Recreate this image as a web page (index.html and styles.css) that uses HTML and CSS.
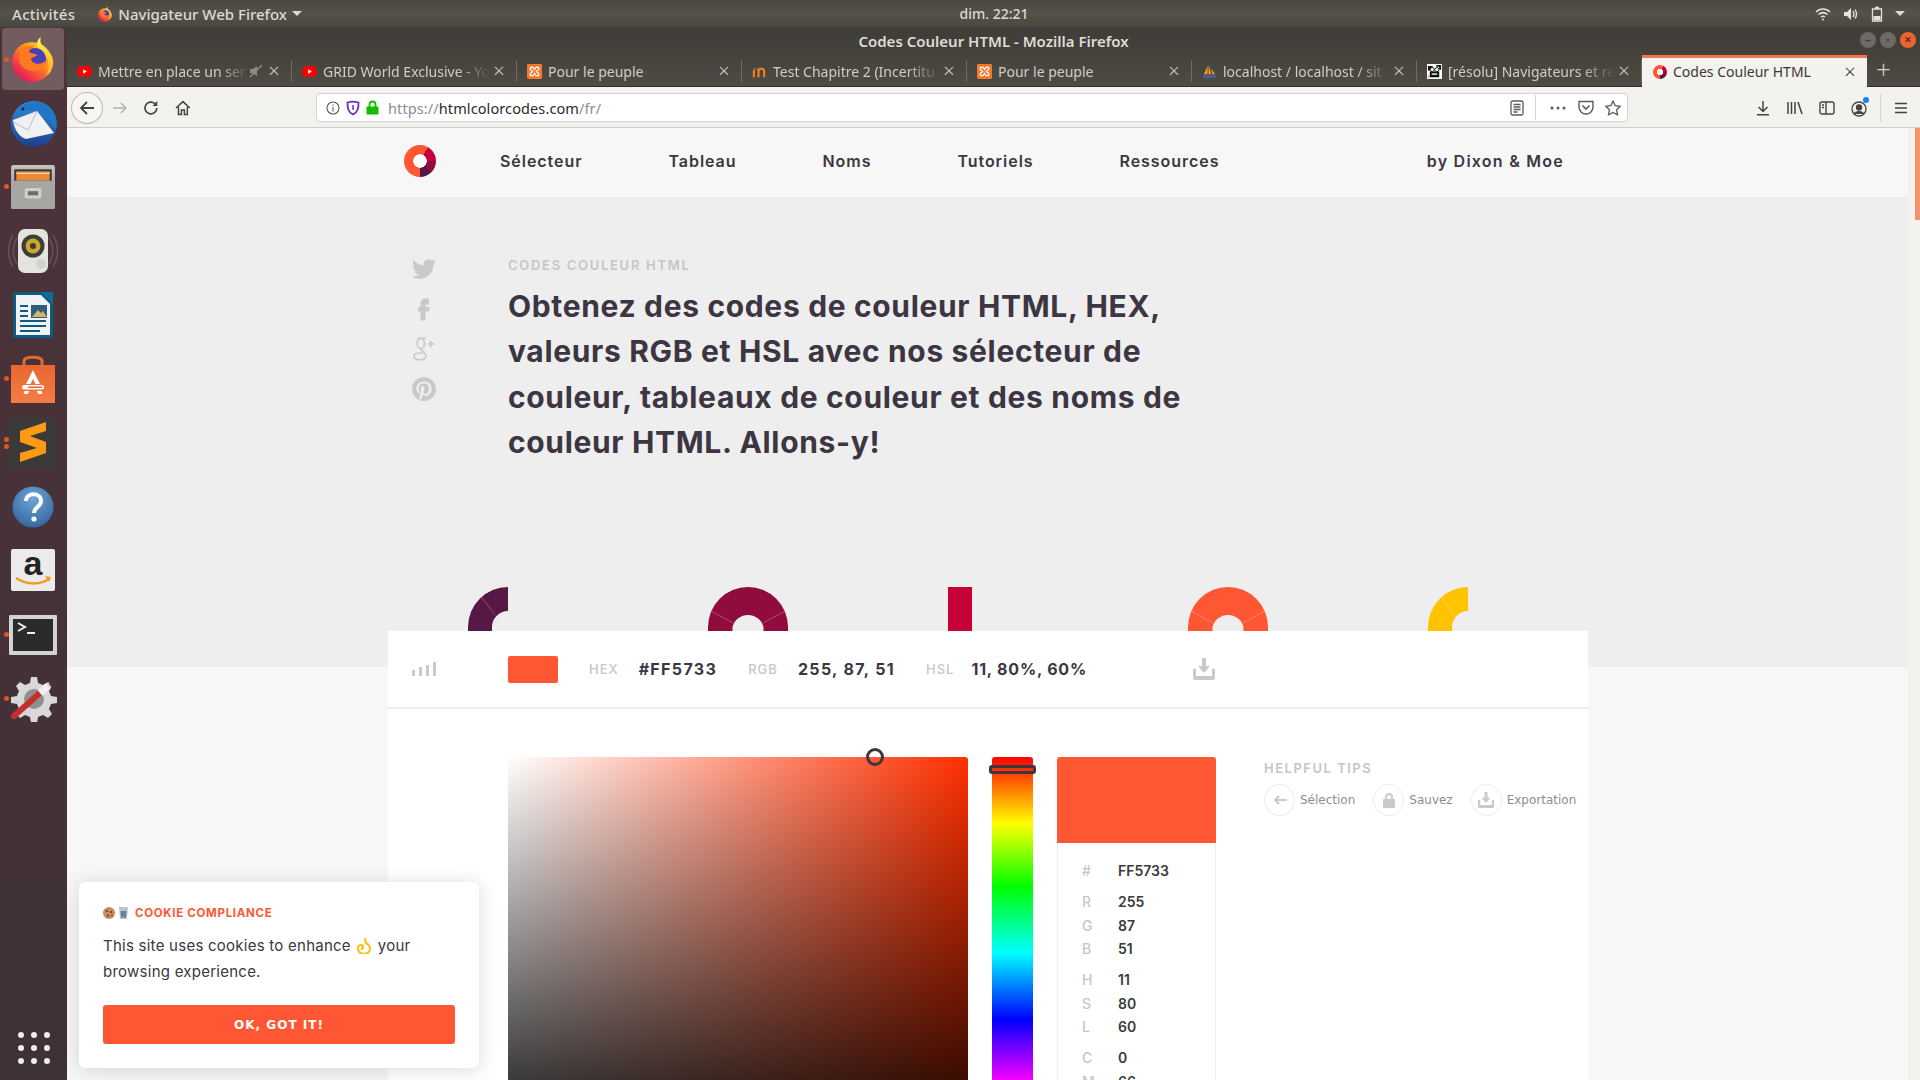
FILE: index.html
```html
<!DOCTYPE html>
<html lang="fr">
<head>
<meta charset="UTF-8">
<title>Codes Couleur HTML - Mozilla Firefox</title>
<link rel="stylesheet" href="styles.css">
</head>
<body>
<svg class="defs" width="0" height="0">
	<defs>
		<linearGradient id="ffBody" x1="0.9" y1="0.1" x2="0.2" y2="0.95">
			<stop offset="0" stop-color="#ffd23a"/>
			<stop offset="0.4" stop-color="#ff8a1e"/>
			<stop offset="0.8" stop-color="#f0344a"/>
			<stop offset="1" stop-color="#d81b60"/>
		</linearGradient>
		<linearGradient id="ffFlame" x1="0.3" y1="0" x2="0.6" y2="1">
			<stop offset="0" stop-color="#fff44f"/>
			<stop offset="1" stop-color="#ffb01f"/>
		</linearGradient>
		<linearGradient id="tbBody" x1="0" y1="0" x2="0" y2="1">
			<stop offset="0" stop-color="#2f8fd8"/>
			<stop offset="1" stop-color="#1d3f8f"/>
		</linearGradient>
		<linearGradient id="cabinet" x1="0" y1="0" x2="0" y2="1">
			<stop offset="0" stop-color="#c4c4c1"/>
			<stop offset="1" stop-color="#8a8a87"/>
		</linearGradient>
		<linearGradient id="bag" x1="0" y1="0" x2="0" y2="1">
			<stop offset="0" stop-color="#e9662f"/>
			<stop offset="1" stop-color="#f37d43"/>
		</linearGradient>
		<radialGradient id="helpBall" cx="0.5" cy="0.3" r="0.8">
			<stop offset="0" stop-color="#6fa5d6"/>
			<stop offset="1" stop-color="#2b5f9c"/>
		</radialGradient>
		<symbol id="firefox" viewBox="0 0 48 48">
			<circle cx="23" cy="27" r="20" fill="url(#ffBody)"/>
			<path d="M32 2c-2 5 1 9 5 12 6 5 8 10 7 16-1 5-3 9-7 11 3-5 4-12 0-18-3-5-9-8-9-14 0-3 2-6 4-7z" fill="url(#ffFlame)"/>
			<circle cx="26" cy="24" r="11" fill="#4a3fb8"/>
			<path d="M13 14c4-3 8-4 12-2-3 1-5 3-5 5 2 2 6 1 8 3-1 2-5 2-6 4 1 4 6 6 11 4 3-1 5-3 6-6 0 8-7 14-15 14-8 0-14-6-14-13 0-4 1-7 3-9z" fill="#ff7a1e"/>
		</symbol>
		<symbol id="yt" viewBox="0 0 16 16">
			<rect x="0.5" y="2.5" width="15" height="11" rx="3" fill="#f00"/>
			<path d="M6.5 5.5v5l4-2.5z" fill="#fff"/>
		</symbol>
		<symbol id="xampp" viewBox="0 0 16 16">
			<rect width="16" height="16" rx="1.5" fill="#f4792b"/>
			<path d="M4 3.5h2.5L8 6l1.5-2.5H12c1 1 1 3-.5 3L10 8l1.5 1.500c1.500 0 1.500 2 .5 3H9.500L8 10l-1.500 2.500H4c-1-1-1-3 .5-3L6 8 4.500 6.500c-1.500 0-1.500-2-.5-3z" fill="none" stroke="#fff" stroke-width="1.3"/>
		</symbol>
		<symbol id="moodle" viewBox="0 0 16 16">
			<path d="M2 14V8c0-2 1-3 2.5-3S7 6 7 8v6M7 14V8c0-2 1.200-3 2.800-3S13 6 13 8v6" fill="none" stroke="#f98012" stroke-width="2.2"/>
			<path d="M1 6l5-3 2 1-4 3z" fill="#555"/>
		</symbol>
		<symbol id="pma" viewBox="0 0 16 16">
			<path d="M2 11L6 2v9zM7 11V1l3 10zM11 11l-1-6 4 6z" fill="#f89c1c"/>
			<rect x="1" y="11.5" width="14" height="3.5" fill="#4a5f8c"/>
		</symbol>
		<symbol id="face" viewBox="0 0 16 16">
			<rect width="16" height="16" fill="#fff"/>
			<path d="M1 2h5v2H4v3H1zM10 1h5v5h-2V3h-3zM3 8h10v6H3z" fill="#111"/>
			<circle cx="5.5" cy="6" r="2.2" fill="#fff" stroke="#111"/>
			<circle cx="10.5" cy="6" r="2.2" fill="#fff" stroke="#111"/>
			<path d="M5 10h6v1.5H5z" fill="#fff"/>
			<path d="M1 12h2v3H1z" fill="#e9a3a3"/>
		</symbol>
	</defs>
</svg>

<header class="topbar">
	<span class="top-activities">Activités</span>
	<svg class="top-ff" width="16" height="16"><use href="#firefox"/></svg>
	<span class="top-app">Navigateur Web Firefox</span>
	<i class="caret"></i>
	<span class="top-clock">dim. 22:21</span>
	<div class="top-status">
		<svg width="16" height="16" viewBox="0 0 16 16" fill="none" stroke="#e4e2dc" stroke-width="1.5"><path d="M1 6c4-4 10-4 14 0M3.5 8.500c3-2.500 6-2.500 9 0M6 11c1.300-1 2.700-1 4 0"/><circle cx="8" cy="13.5" r="1" fill="#e4e2dc" stroke="none"/></svg>
		<svg width="16" height="16" viewBox="0 0 16 16" fill="none" stroke="#e4e2dc" stroke-width="1.3"><path d="M1 6h3l4-4v12l-4-4H1z" fill="#e4e2dc" stroke="none"/><path d="M10 5c1.300 2 1.300 4 0 6M12 3.500c2 3 2 6 0 9"/></svg>
		<svg width="12" height="16" viewBox="0 0 12 16" fill="none" stroke="#e4e2dc" stroke-width="1.3"><path d="M4 1.500h4M1.500 3h9v12h-9z"/><rect x="2.5" y="10" width="7" height="4" fill="#e4e2dc" stroke="none"/></svg>
		<i class="caret"></i>
	</div>
</header>

<div class="desktop">
	<nav class="dock">
		<div class="dock-item dock-active"><i class="run"></i><svg width="48" height="48"><use href="#firefox"/></svg></div>
		<div class="dock-item">
			<svg width="50" height="50" viewBox="0 0 50 50">
				<circle cx="26" cy="26" r="23" fill="url(#tbBody)"/>
				<path d="M5 22l24-9 17 22-28 6c-7-2-12-10-13-19z" fill="#f1f1f1"/>
				<path d="M5 24l15 8 9-19" fill="none" stroke="#b9bcc4" stroke-width="1"/>
				<path d="M10 12c6-8 20-12 30-4 7 6 10 16 7 24-3-8-10-18-18-19z" fill="#2277c4"/>
				<circle cx="15" cy="11" r="1.5" fill="#12294f"/>
			</svg>
		</div>
		<div class="dock-item"><i class="run"></i>
			<svg width="48" height="48" viewBox="0 0 46 46">
				<rect x="2" y="2" width="42" height="42" rx="2" fill="url(#cabinet)"/>
				<rect x="5" y="6" width="36" height="13" fill="#3a3a38"/>
				<rect x="7" y="8" width="32" height="9" fill="#e78a3c"/>
				<path d="M7 10h32" stroke="#f7d9b0" stroke-width="1.2"/>
				<rect x="2" y="17" width="42" height="27" rx="1" fill="#a6a6a3"/>
				<rect x="15" y="24" width="16" height="10" rx="2" fill="#d0d0cd"/>
				<rect x="18" y="27" width="10" height="4" fill="#6c6c6a"/>
			</svg>
		</div>
		<div class="dock-item">
			<svg width="50" height="50" viewBox="0 0 50 50">
				<path d="M9 12c-5 8-5 18 0 26M41 12c5 8 5 18 0 26M5 9c-6 10-6 22 0 32M45 9c6 10 6 22 0 32" fill="none" stroke="#5f5566" stroke-width="1.5"/>
				<rect x="10" y="3" width="30" height="44" rx="7" fill="#e4e4df"/>
				<circle cx="25" cy="20" r="11.5" fill="#3c3c38"/>
				<circle cx="25" cy="20" r="7.5" fill="#c8a92a"/>
				<circle cx="25" cy="20" r="3" fill="#3c3c38"/>
				<circle cx="33" cy="38" r="5" fill="#d2d2cd"/>
			</svg>
		</div>
		<div class="dock-item">
			<svg width="42" height="50" viewBox="0 0 42 50">
				<path d="M1 2h40v46H1z" fill="#0e5a80"/>
				<path d="M4 5h25l9 9v31H4z" fill="#f1f2f3"/>
				<path d="M29 2h12v12z" fill="#0e6d9c"/>
				<path d="M8 16h8M8 21h8M8 26h8M8 31h26M8 36h26M8 41h20" stroke="#0e5a80" stroke-width="2"/>
				<rect x="19" y="15" width="16" height="13" fill="#2d5f7d"/>
				<path d="M20 27l6-7 3 3 2-2 4 6z" fill="#d7b26a"/>
			</svg>
		</div>
		<div class="dock-item"><i class="run"></i>
			<svg width="44" height="48" viewBox="0 0 44 48">
				<path d="M13 13V6c0-5 18-5 18 0v7" fill="none" stroke="#dd6b32" stroke-width="3"/>
				<path d="M0 10h44v38H0z" fill="url(#bag)"/>
				<path d="M22 15l7 14h-4.500L22 24l-2.500 5H15z" fill="#fff"/>
				<rect x="11" y="30" width="22" height="4.500" rx="2.200" fill="#fff"/>
				<rect x="17" y="31.500" width="14" height="1.500" fill="#e9662f"/>
				<path d="M13.500 36h4.500l-1 3h-4.500zM26 36h4.500l1 3H27z" fill="#fff"/>
			</svg>
		</div>
		<div class="dock-item"><i class="run run-top"></i><i class="run run-bottom"></i>
			<svg width="50" height="50" viewBox="0 0 50 50">
				<rect width="50" height="50" rx="3" fill="#3b3a38"/>
				<path d="M12 13l26-9v9l-16 5 16 6v11l-26 9v-9l17-5-17-6z" fill="#ff9a16"/>
			</svg>
		</div>
		<div class="dock-item">
			<svg width="44" height="44" viewBox="0 0 44 44">
				<circle cx="22" cy="22" r="20.5" fill="url(#helpBall)"/>
				<path d="M15 16c0-9 15-9 15 0 0 6-7 6-7 12" fill="none" stroke="#fff" stroke-width="4"/>
				<circle cx="23" cy="34" r="2.6" fill="#fff"/>
			</svg>
		</div>
		<div class="dock-item">
			<svg width="44" height="44" viewBox="0 0 44 44">
				<rect width="44" height="42" rx="2" fill="#ebebeb"/>
				<text class="amazon-a" x="22" y="26" text-anchor="middle">a</text>
				<path d="M5 29c10 7 24 7 33 1" fill="none" stroke="#f29b1d" stroke-width="2.5"/>
				<path d="M34 27l6 1-2 5z" fill="#f29b1d"/>
			</svg>
		</div>
		<div class="dock-item"><i class="run"></i>
			<svg width="48" height="40" viewBox="0 0 48 40">
				<rect width="48" height="40" rx="1" fill="#d4d4d1"/>
				<rect x="4" y="4" width="40" height="32" fill="#2b2b2b"/>
				<path d="M9 8l7 4-7 4" fill="none" stroke="#f0f0f0" stroke-width="2"/>
				<path d="M18 18h8" stroke="#f0f0f0" stroke-width="2"/>
			</svg>
		</div>
		<div class="dock-item"><i class="run"></i>
			<svg width="48" height="46" viewBox="0 0 48 46">
				<path d="M22 1h6l1 6 5 2 5-3 4 4-3 5 2 5 6 1v6l-6 1-2 5 3 5-4 4-5-3-5 2-1 6h-6l-1-6-5-2-5 3-4-4 3-5-2-5-6-1v-6l6-1 2-5-3-5 4-4 5 3 5-2z" fill="#d8d8d8"/>
				<circle cx="25" cy="23" r="10" fill="#8f8f8f"/>
				<path d="M5 40l27-24" stroke="#c5302c" stroke-width="6" stroke-linecap="round"/>
				<path d="M31 17l8-7" stroke="#f0f0f0" stroke-width="7"/>
				<path d="M46 3l-6 5 3 4 5-2" fill="#4a3338"/>
			</svg>
		</div>
		<div class="dock-apps">
			<i></i><i></i><i></i><i></i><i></i><i></i><i></i><i></i><i></i>
		</div>
	</nav>

	<div class="window">
		<div class="titlebar">
			<span class="title-text">Codes Couleur HTML - Mozilla Firefox</span>
			<div class="win-btns">
				<i class="win-btn">–</i><i class="win-btn">▫</i><i class="win-btn win-close">×</i>
			</div>
		</div>

		<div class="tabs">
			<div class="tab"><svg width="15" height="15"><use href="#yt"/></svg><span class="tab-title">Mettre en place un ser</span>
				<svg class="tab-mute" width="14" height="14" viewBox="0 0 14 14" fill="#8f8c85"><path d="M1 5h3l4-3v10L4 9H1z"/><path d="M1 13L13 1" stroke="#8f8c85" stroke-width="1.5"/></svg>
				<span class="tab-x">×</span></div>
			<div class="tab"><svg width="15" height="15"><use href="#yt"/></svg><span class="tab-title">GRID World Exclusive - Yo</span><span class="tab-x">×</span></div>
			<div class="tab"><svg width="15" height="15"><use href="#xampp"/></svg><span class="tab-title tab-full">Pour le peuple</span><span class="tab-x">×</span></div>
			<div class="tab"><svg width="15" height="15"><use href="#moodle"/></svg><span class="tab-title">Test Chapitre 2 (Incertitu</span><span class="tab-x">×</span></div>
			<div class="tab"><svg width="15" height="15"><use href="#xampp"/></svg><span class="tab-title tab-full">Pour le peuple</span><span class="tab-x">×</span></div>
			<div class="tab"><svg width="15" height="15"><use href="#pma"/></svg><span class="tab-title">localhost / localhost / sit</span><span class="tab-x">×</span></div>
			<div class="tab"><svg width="15" height="15"><use href="#face"/></svg><span class="tab-title">[résolu] Navigateurs et re</span><span class="tab-x">×</span></div>
			<div class="tab tab-active"><i class="ring ring-small"></i><span class="tab-title tab-full">Codes Couleur HTML</span><span class="tab-x">×</span></div>
			<span class="tab-new">+</span>
		</div>

		<div class="toolbar">
			<span class="tool-back"><svg width="18" height="18" viewBox="0 0 18 18" fill="none" stroke="#45433f" stroke-width="1.8"><path d="M16 9H3M9 3L3 9l6 6"/></svg></span>
			<svg class="tool-btn" width="16" height="16" viewBox="0 0 16 16" fill="none" stroke="#b4b3af" stroke-width="1.6"><path d="M1 8h13M9 3l5 5-5 5"/></svg>
			<svg class="tool-btn" width="16" height="16" viewBox="0 0 16 16" fill="none" stroke="#45433f" stroke-width="1.7"><path d="M14 8a6 6 0 1 1-2-4.500"/><path d="M14.5 1v5H9.500z" fill="#45433f" stroke="none"/></svg>
			<svg class="tool-btn" width="16" height="16" viewBox="0 0 16 16" fill="none" stroke="#45433f" stroke-width="1.5"><path d="M1 8l7-6.500L15 8M3.500 7v7.500h3V10h3v4.500h3V7"/></svg>

			<div class="urlbar">
				<svg width="14" height="14" viewBox="0 0 14 14" fill="none" stroke="#5d5c58" stroke-width="1.1"><circle cx="7" cy="7" r="6"/><path d="M7 6v4.500M7 3.500v1.300"/></svg>
				<svg width="14" height="16" viewBox="0 0 14 16" fill="none" stroke="#6f2bc4" stroke-width="1.8"><path d="M1.5 2.500c3-1 8-1 11 0 0 5 0 9-5.500 12-5.500-3-5.500-7-5.500-12z"/><path d="M7 5v5" stroke-width="1.5"/></svg>
				<svg width="13" height="15" viewBox="0 0 13 15"><path d="M3.5 7V4.500a3 3 0 0 1 6 0V7" fill="none" stroke="#12bc00" stroke-width="1.8"/><rect x="0.5" y="6.5" width="12" height="8" rx="1" fill="#12bc00"/></svg>
				<span class="url-text">https://<b>htmlcolorcodes.com</b>/fr/</span>
				<svg class="url-reader" width="14" height="16" viewBox="0 0 14 16" fill="none" stroke="#5d5c58" stroke-width="1.3"><rect x="1" y="1" width="12" height="14" rx="1.5"/><path d="M3.500 4.500h7M3.500 7h7M3.500 9.500h7M3.500 12h4"/></svg>
				<i class="url-sep"></i>
				<svg width="16" height="4" viewBox="0 0 16 4" fill="#5d5c58"><circle cx="2" cy="2" r="1.5"/><circle cx="8" cy="2" r="1.5"/><circle cx="14" cy="2" r="1.5"/></svg>
				<svg class="url-pocket" width="16" height="15" viewBox="0 0 16 15" fill="none" stroke="#5d5c58" stroke-width="1.4"><path d="M1 1.500h14V7a7 7 0 0 1-14 0z"/><path d="M4.500 5.500L8 9l3.500-3.500" stroke-width="1.6"/></svg>
				<svg class="url-star" width="16" height="16" viewBox="0 0 16 16" fill="none" stroke="#5d5c58" stroke-width="1.3"><path d="M8 1l2.200 4.600 5 .7-3.600 3.500.9 5L8 12.400l-4.500 2.400.9-5L.8 6.300l5-.7z"/></svg>
			</div>

			<div class="tool-right">
				<svg width="16" height="16" viewBox="0 0 16 16" fill="none" stroke="#45433f" stroke-width="1.5"><path d="M8 1v10M3.500 7L8 11.500 12.500 7M2 14.800h12"/></svg>
				<svg width="18" height="16" viewBox="0 0 18 16" fill="none" stroke="#45433f" stroke-width="1.5"><path d="M2 2v12M5.500 2v12M9 2v12M12 2l4 12"/></svg>
				<svg width="16" height="16" viewBox="0 0 16 16" fill="none" stroke="#45433f" stroke-width="1.4"><rect x="1" y="2" width="14" height="12" rx="2"/><path d="M7 2v12M3 5h2M3 7.500h2"/></svg>
				<span class="tool-account">
					<svg width="16" height="16" viewBox="0 0 16 16" fill="none" stroke="#45433f" stroke-width="1.3"><circle cx="8" cy="8" r="7"/><circle cx="8" cy="6.5" r="2.5" fill="#45433f"/><path d="M3.500 13c1-3 8-3 9 0" fill="#45433f"/></svg>
					<i class="account-dot"></i>
				</span>
				<i class="tool-sep"></i>
				<svg width="14" height="12" viewBox="0 0 14 12" stroke="#45433f" stroke-width="1.6"><path d="M1 1.500h12M1 6h12M1 10.500h12"/></svg>
			</div>
		</div>

		<div class="viewport">
			<main class="page">
				<div class="sitenav">
					<div class="nav-inner">
						<i class="ring"></i>
						<a class="nav-link">Sélecteur</a>
						<a class="nav-link">Tableau</a>
						<a class="nav-link">Noms</a>
						<a class="nav-link">Tutoriels</a>
						<a class="nav-link">Ressources</a>
						<a class="nav-link nav-by">by Dixon &amp; Moe</a>
					</div>
				</div>

				<section class="hero">
					<div class="hero-inner">
						<div class="social">
							<svg width="24" height="24" viewBox="0 0 24 24" fill="#c9c9c9"><path d="M23.953 4.570a10 10 0 0 1-2.825.775 4.958 4.958 0 0 0 2.163-2.723c-.951.555-2.005.959-3.127 1.184a4.920 4.920 0 0 0-8.384 4.482C7.690 8.095 4.067 6.130 1.640 3.162a4.822 4.822 0 0 0-.666 2.475c0 1.710.870 3.213 2.188 4.096a4.904 4.904 0 0 1-2.228-.616v.060a4.923 4.923 0 0 0 3.946 4.827 4.996 4.996 0 0 1-2.212.085 4.936 4.936 0 0 0 4.604 3.417 9.867 9.867 0 0 1-6.102 2.105c-.390 0-.779-.023-1.170-.067a13.995 13.995 0 0 0 7.557 2.209c9.053 0 13.998-7.496 13.998-13.985 0-.210 0-.420-.015-.630A9.935 9.935 0 0 0 24 4.590z"/></svg>
							<svg width="24" height="24" viewBox="0 0 24 24" fill="#c9c9c9"><path d="M14 7.500h3V1.500h-3.500C10.500 1.500 8.500 3.500 8.500 6.500V10H6v4.500h2.500v9h5v-9H17l.5-4.500h-4V8.500c0-.6.4-1 .5-1z"/></svg>
							<svg width="24" height="24" viewBox="0 0 24 26" fill="none" stroke="#c9c9c9" stroke-width="1.8"><ellipse cx="8.5" cy="7" rx="4" ry="5.5"/><path d="M5 1.500h9M9 12.500c-2 2 5 4 5 7.500 0 6-13 6-13 1 0-3 5-4 9-3.500"/><path d="M16 7.500h7M19.500 4v7"/></svg>
							<svg width="24" height="24" viewBox="0 0 24 24" fill="#c9c9c9"><path d="M12.017 0C5.396 0 .029 5.367.029 11.987c0 5.079 3.158 9.417 7.618 11.162-.105-.949-.199-2.403.041-3.439.219-.937 1.406-5.957 1.406-5.957s-.359-.720-.359-1.781c0-1.663.967-2.911 2.168-2.911 1.024 0 1.518.769 1.518 1.688 0 1.029-.653 2.567-.992 3.992-.285 1.193.600 2.165 1.775 2.165 2.128 0 3.768-2.245 3.768-5.487 0-2.861-2.063-4.869-5.008-4.869-3.410 0-5.409 2.562-5.409 5.199 0 1.033.394 2.143.889 2.741.099.120.112.225.085.345-.090.375-.293 1.199-.334 1.363-.053.225-.172.271-.401.165-1.495-.690-2.433-2.878-2.433-4.646 0-3.776 2.748-7.252 7.920-7.252 4.158 0 7.392 2.967 7.392 6.923 0 4.135-2.607 7.462-6.233 7.462-1.214 0-2.354-.629-2.758-1.379l-.749 2.848c-.269 1.045-1.004 2.352-1.498 3.146 1.123.345 2.306.535 3.550.535 6.607 0 11.985-5.365 11.985-11.987C23.970 5.390 18.592.026 11.985.026L12.017 0z"/></svg>
						</div>
						<div class="hero-text">
							<p class="eyebrow">CODES COULEUR HTML</p>
							<h1 class="headline">Obtenez des codes de couleur HTML, HEX,<br>valeurs RGB et HSL avec nos sélecteur de<br>couleur, tableaux de couleur et des noms de<br>couleur HTML. Allons-y!</h1>
						</div>
					</div>
					<svg class="donuts" width="1200" height="44" viewBox="0 0 1200 44">
						<path d="M120 0a40 40 0 0 0-40 40v4h24v-4a16 16 0 0 1 16-16z" fill="#581845"/>
						<path d="M92 8l15 20" stroke="#fff" stroke-opacity=".25"/>
						<path d="M360 0a40 40 0 0 0-40 40v4h24.500v-4a16 16 0 0 1 31 0v4H400v-4a40 40 0 0 0-40-40z" fill="#900c3f"/>
						<path d="M323 24l22 12M397 24l-22 12" stroke="#fff" stroke-opacity=".25"/>
						<rect x="560" width="24" height="44" fill="#c70039"/>
						<path d="M840 0a40 40 0 0 0-40 40v4h24.500v-4a16 16 0 0 1 31 0v4H880v-4a40 40 0 0 0-40-40z" fill="#ff5733"/>
						<path d="M803 24l22 12M877 24l-22 12" stroke="#fff" stroke-opacity=".25"/>
						<path d="M1080 0a40 40 0 0 0-40 40v4h24v-4a16 16 0 0 1 16-16z" fill="#ffc300"/>
						<path d="M1052 8l15 20" stroke="#fff" stroke-opacity=".3"/>
					</svg>
				</section>

				<section class="card">
					<div class="stats">
						<div class="stats-chart">
							<svg width="24" height="14" viewBox="0 0 24 14" fill="#c9c9c9"><rect y="8" width="3" height="6"/><rect x="7" y="5" width="3" height="9"/><rect x="14" y="3" width="3" height="11"/><rect x="21" width="3" height="14"/></svg>
						</div>
						<i class="stat-swatch"></i>
						<span class="stat-label">HEX</span><span class="stat-value">#FF5733</span>
						<span class="stat-label">RGB</span><span class="stat-value">255, 87, 51</span>
						<span class="stat-label stat-label-hsl">HSL</span><span class="stat-value stat-value-hsl">11, 80%, 60%</span>
						<svg class="stat-dl" width="22" height="22" viewBox="0 0 22 22" fill="#c9c9c9"><path d="M9 0h4v8h4l-6 7-6-7h4z"/><path d="M0 11h3v7h16v-7h3v9a2 2 0 0 1-2 2H2a2 2 0 0 1-2-2z"/></svg>
					</div>

					<div class="tool">
						<div class="picker"><i class="picker-knob"></i></div>
						<div class="hue"><i class="hue-handle"></i></div>
						<div class="panel">
							<div class="panel-swatch"></div>
							<div class="panel-rows">
								<div class="row row-gap"><span>#</span><b>FF5733</b></div>
								<div class="row"><span>R</span><b>255</b></div>
								<div class="row"><span>G</span><b>87</b></div>
								<div class="row row-gap"><span>B</span><b>51</b></div>
								<div class="row"><span>H</span><b>11</b></div>
								<div class="row"><span>S</span><b>80</b></div>
								<div class="row row-gap"><span>L</span><b>60</b></div>
								<div class="row"><span>C</span><b>0</b></div>
								<div class="row"><span>M</span><b>66</b></div>
							</div>
						</div>
						<div class="tips">
							<p class="tips-head">HELPFUL TIPS</p>
							<div class="tips-row">
								<span class="tip-circle"><svg width="14" height="10" viewBox="0 0 14 10" fill="none" stroke="#c9c9c9" stroke-width="2"><path d="M14 5H2M6 1L2 5l4 4"/></svg></span><span class="tip-text">Sélection</span>
								<span class="tip-circle"><svg width="12" height="15" viewBox="0 0 12 15"><path d="M3 7V4a3 3 0 0 1 6 0v3" fill="none" stroke="#c9c9c9" stroke-width="1.8"/><rect y="6" width="12" height="9" rx="1" fill="#c9c9c9"/></svg></span><span class="tip-text">Sauvez</span>
								<span class="tip-circle"><svg width="16" height="16" viewBox="0 0 22 22" fill="#c9c9c9"><path d="M9 0h4v8h4l-6 7-6-7h4z"/><path d="M0 11h3v7h16v-7h3v9a2 2 0 0 1-2 2H2a2 2 0 0 1-2-2z"/></svg></span><span class="tip-text">Exportation</span>
							</div>
						</div>
					</div>
				</section>
			</main>
			<aside class="scrollbar"><i class="scroll-thumb"></i></aside>

			<div class="cookie">
				<p class="cookie-title">
					<svg width="12" height="12" viewBox="0 0 12 12"><circle cx="6" cy="6" r="6" fill="#c98a5e"/><circle cx="4" cy="4" r="1" fill="#5a3422"/><circle cx="8" cy="5" r="1" fill="#5a3422"/><circle cx="5" cy="8.5" r="1" fill="#5a3422"/><circle cx="9" cy="8.5" r=".8" fill="#5a3422"/></svg>
					<svg class="cookie-milk" width="9" height="12" viewBox="0 0 9 12"><path d="M0 0h9L8 12H1z" fill="#b8c6cf"/><path d="M1.500 4h6L7 10.500H2z" fill="#6b8494"/></svg>
					COOKIE COMPLIANCE
				</p>
				<p class="cookie-text">This site uses cookies to enhance <svg class="cookie-ok" width="14" height="17" viewBox="0 0 14 17"><path d="M8 1c1 3 0 4 1 5 2 1 4 3 4 6 0 3-3 5-6 5s-6-2-6-5c0-2 1-4 3-4 1 0 2 1 2 2s-1 2-2 2" fill="none" stroke="#fcc21b" stroke-width="2.2"/></svg> your browsing experience.</p>
				<button class="cookie-btn">OK, GOT IT!</button>
			</div>
		</div>
	</div>
</div>
</body>
</html>
```

FILE: styles.css
```css
*{
	box-sizing: border-box;
}
html,body{
	margin: 0;
	padding: 0;
	width: 1920px;
	height: 1080px;
	overflow: hidden;
	font-family: "Noto Sans", sans-serif;
}
i{
	font-style: normal;
}
p,h1{
	margin: 0;
}
.defs{
	position: absolute;
}

/* ubuntu top bar */
.topbar{
	height: 27px;
	display: flex;
	align-items: center;
	background: linear-gradient(#4a4741, #55524a 50%, #4a4740);
	color: #dcd9d2;
	font-size: 15px;
	font-weight: 500;
	position: relative;
}
.top-activities{
	letter-spacing: 0.3px;
	margin-left: 12px;
}
.top-ff{
	margin-left: 22px;
}
.top-app{
	margin-left: 5px;
}
.caret{
	width: 0;
	height: 0;
	border: 5px solid transparent;
	border-top-color: #dcd9d2;
	border-bottom: 0;
	margin-left: 5px;
}
.top-clock{
	position: absolute;
	left: 957px;
	width: 74px;
	text-align: center;
	font-size: 14px;
}
.top-status{
	margin-left: auto;
	display: flex;
	align-items: center;
	gap: 12px;
	padding-right: 15px;
}
.top-status .caret{
	margin-left: 0;
}

.desktop{
	display: flex;
	height: 1053px;
}

/* dock */
.dock{
	width: 67px;
	flex: none;
	display: flex;
	flex-direction: column;
	background: linear-gradient(#4d3339, #3f3138);
}
.dock-item{
	height: 64px;
	margin: 0 3px 0 2px;
	display: flex;
	align-items: center;
	justify-content: center;
	position: relative;
	border-radius: 4px;
}
.dock-active{
	background: #735c60;
	height: 62px;
	margin-top: 1px;
	margin-bottom: 1px;
}
.amazon-a{
	font-family: "Liberation Sans", sans-serif;
	font-weight: 700;
	font-size: 34px;
	fill: #222;
}
.run{
	position: absolute;
	left: 2px;
	top: 29px;
	width: 5px;
	height: 5px;
	border-radius: 50%;
	background: #e95420;
}
.run-top{
	top: 26px;
}
.run-bottom{
	top: 33px;
}
.dock-apps{
	margin: auto 0 16px 18px;
	display: grid;
	grid-template-columns: repeat(3, 6px);
	gap: 7px;
}
.dock-apps i{
	width: 6px;
	height: 6px;
	border-radius: 50%;
	background: #eee;
}

.window{
	flex: 1;
	display: flex;
	flex-direction: column;
	min-width: 0;
}
.titlebar{
	height: 28px;
	background: linear-gradient(#3f3d37, #45423c);
	position: relative;
	display: flex;
	justify-content: center;
	align-items: center;
	color: #dfdcd5;
	font-size: 15px;
	font-weight: 600;
}
.title-text{
	margin-top: 0;
}
.win-btns{
	position: absolute;
	right: 4px;
	top: 5px;
	display: flex;
	gap: 4px;
}
.win-btn{
	width: 16px;
	height: 16px;
	border-radius: 50%;
	background: #6d6a63;
	color: #3d3b36;
	font-size: 12px;
	line-height: 15px;
	text-align: center;
}
.win-close{
	background: #e9652f;
	color: #4a2a1a;
}

/* tabs */
.tabs{
	height: 32px;
	display: flex;
	background: linear-gradient(#45423c, #4f4c45);
	border-bottom: 1px solid #2f2e2a;
	color: #d0cdc6;
	font-size: 14px;
}
.tab{
	width: 225px;
	margin: 5px 0 4px;
	padding: 0 10px;
	display: flex;
	align-items: center;
	border-right: 1px solid #6e6b63;
}
.tab svg{
	flex: none;
}
.tab-title{
	flex: 1;
	margin-left: 6px;
	white-space: nowrap;
	overflow: hidden;
	-webkit-mask-image: linear-gradient(to right, #000 80%, transparent);
	mask-image: linear-gradient(to right, #000 80%, transparent);
}
.tab-full{
	-webkit-mask-image: none;
	mask-image: none;
}
.tab-mute{
	margin-right: 2px;
}
.tab-x{
	flex: none;
	width: 14px;
	margin-left: 2px;
	text-align: center;
	font-size: 20px;
	line-height: 18px;
	font-weight: 300;
}
.tab-active{
	margin: 0;
	height: 32px;
	background: #f3f2ef;
	border-top: 3px solid #f1764a;
	border-right: 0;
	color: #3a3936;
	padding: 0 10px 2px 11px;
}
.tab-new{
	margin-left: 9px;
	color: #d0cdc6;
	font-size: 26px;
	line-height: 28px;
	font-weight: 300;
}

/* toolbar */
.toolbar{
	height: 41px;
	background: #f3f2ef;
	border-bottom: 1px solid #cfcdc8;
	display: flex;
	align-items: center;
	padding: 1px 12px 0 4px;
}
.tool-back{
	width: 32px;
	height: 32px;
	border-radius: 50%;
	border: 1px solid #b9b8b3;
	background: #f7f6f4;
	display: flex;
	align-items: center;
	justify-content: center;
	margin-right: 9px;
}
.tool-btn{
	margin-right: 16px;
}
.urlbar{
	width: 1312px;
	height: 29px;
	flex: none;
	margin-left: 109px;
	background: #fff;
	border: 1px solid #d4d3cf;
	border-radius: 4px;
	display: flex;
	align-items: center;
	padding: 0 6px 0 9px;
	gap: 6px;
}
.url-text{
	margin-left: 3px;
	color: #8b8e92;
	font-size: 14.5px;
	letter-spacing: 0.1px;
	flex: 1;
}
.url-text b{
	color: #2a2a2e;
	font-weight: 400;
}
.url-sep{
	width: 1px;
	height: 25px;
	background: #d4d3cf;
	margin: 0 8px 0 5px;
}
.url-pocket{
	margin-left: 6px;
}
.url-star{
	margin-left: 5px;
}
.tool-right{
	margin-left: 127px;
	display: flex;
	align-items: center;
	gap: 15px;
}
.tool-account{
	position: relative;
	height: 16px;
	margin-left: 1px;
}
.account-dot{
	position: absolute;
	right: -2px;
	top: -3px;
	width: 6px;
	height: 6px;
	border-radius: 50%;
	background: #0a84ff;
}
.tool-sep{
	width: 1px;
	height: 28px;
	margin: 0 -2px;
	background: #d4d3cf;
}

/* page */
.viewport{
	flex: 1;
	display: flex;
	position: relative;
	overflow: hidden;
}
.page{
	width: 1841px;
	flex: none;
	background: #f7f7f7;
	color: #3d3642;
	font-family: Inter, sans-serif;
}
.scrollbar{
	flex: 1;
	background: #f3f2ef;
	display: flex;
	justify-content: flex-end;
}
.scroll-thumb{
	width: 5px;
	height: 92px;
	background: #f4936b;
}
.sitenav{
	height: 69px;
	background: #f7f7f7;
	padding: 0 0 4px 321px;
}
.nav-inner{
	width: 1176px;
	height: 100%;
	padding-left: 16px;
	display: flex;
	align-items: center;
	gap: 86px;
}
.nav-link{
	font-size: 16px;
	font-weight: 600;
	letter-spacing: 0.95px;
}
.nav-by{
	margin-left: auto;
	letter-spacing: 1.25px;
}
.ring{
	width: 32px;
	height: 32px;
	border-radius: 50%;
	margin-right: -22px;
	background: radial-gradient(circle, #fff 6.5px, transparent 7px), conic-gradient(from 30deg, #c70039 0 60deg, #900c3f 60deg 105deg, #581845 105deg 150deg, #ff5733 150deg 360deg);
}
.ring-small{
	width: 14px;
	height: 14px;
	margin-right: 0;
	flex: none;
	background: radial-gradient(circle, #f3f2ef 3px, transparent 3.5px), conic-gradient(from 30deg, #c70039 0 60deg, #900c3f 60deg 105deg, #581845 105deg 150deg, #ff5733 150deg 360deg);
}

.hero{
	height: 470px;
	background: #eee;
	padding: 0 0 36px 321px;
	display: flex;
	flex-direction: column;
	justify-content: space-between;
}
.hero-inner{
	display: flex;
	padding-top: 59px;
}
.social{
	width: 120px;
	flex: none;
	padding: 1px 0 0 24px;
	display: flex;
	flex-direction: column;
	gap: 16px;
}
.eyebrow{
	font-size: 13px;
	font-weight: 600;
	letter-spacing: 1.7px;
	line-height: 18px;
	color: #c6c6c6;
}
.headline{
	margin-top: 10px;
	font-size: 30px;
	line-height: 45.3px;
	font-weight: 700;
	letter-spacing: 0.66px;
	color: #3d3642;
}
.donuts{
	display: block;
	flex: none;
}

/* main card */
.card{
	width: 1200px;
	margin: -36px 0 0 321px;
	background: #fff;
	height: 520px;
	position: relative;
}
.stats{
	height: 78px;
	border-bottom: 2px solid #eee;
	padding-right: 373px;
	display: flex;
	align-items: center;
}
.stats-chart{
	width: 120px;
	flex: none;
	padding-left: 24px;
	display: flex;
}
.stat-swatch{
	width: 50px;
	height: 27px;
	background: #ff5733;
	border-radius: 2px;
	margin-right: 31px;
}
.stat-label{
	color: #c6c6c6;
	font-size: 13px;
	letter-spacing: 1px;
	font-weight: 500;
	margin-right: 20px;
}
.stat-label-hsl{
	margin-right: 17px;
}
.stat-value{
	font-weight: 700;
	font-size: 16px;
	letter-spacing: 1.35px;
	margin-right: 31px;
}
.stat-value-hsl{
	letter-spacing: 0.8px;
}
.stat-dl{
	margin-left: auto;
}
.tool{
	display: flex;
	padding: 48px 0 0 120px;
}
.picker{
	width: 460px;
	height: 420px;
	flex: none;
	border-radius: 3px;
	background: linear-gradient(to top, #000, rgba(0,0,0,0)), linear-gradient(to right, #fff, #ff3000);
	position: relative;
}
.picker-knob{
	position: absolute;
	left: 358px;
	top: -9px;
	width: 18px;
	height: 18px;
	border-radius: 50%;
	border: 3px solid #3d3642;
	background: linear-gradient(#fff 52%, #ff5733 52%);
}
.hue{
	width: 41px;
	height: 392px;
	flex: none;
	margin-left: 24px;
	border-radius: 3px;
	background: linear-gradient(#f00, #ff0 17%, #0f0 33%, #0ff 50%, #00f 67%, #f0f 83%, #f00);
	position: relative;
}
.hue-handle{
	position: absolute;
	left: -3px;
	top: 8px;
	width: 47px;
	height: 9px;
	border: 3px solid #3d3642;
	border-radius: 3px;
}
.panel{
	width: 159px;
	flex: none;
	margin-left: 24px;
	height: 400px;
	border: 1px solid #eee;
	border-top: 0;
	border-radius: 3px;
}
.panel-swatch{
	height: 86px;
	margin: 0 -1px;
	background: #ff5733;
	border-radius: 3px 3px 0 0;
}
.panel-rows{
	padding: 16px 0 0 24px;
}
.row{
	display: flex;
	height: 23.5px;
	align-items: center;
	font-size: 14px;
}
.row-gap{
	margin-bottom: 7.5px;
}
.row span{
	width: 36px;
	color: #c6c6c6;
	font-weight: 500;
}
.row b{
	font-weight: 600;
	color: #3a3a3a;
	font-size: 14px;
}
.tips{
	margin-left: 48px;
	flex: none;
}
.tips-head{
	font-size: 13px;
	line-height: 22px;
	letter-spacing: 1.5px;
	font-weight: 600;
	color: #c6c6c6;
}
.tips-row{
	margin-top: 5px;
	display: flex;
	align-items: center;
}
.tip-circle{
	width: 31px;
	height: 32px;
	border: 1px solid #eee;
	border-radius: 50%;
	display: flex;
	align-items: center;
	justify-content: center;
	flex: none;
}
.tip-text{
	margin: 0 18px 0 5px;
	font-family: "DejaVu Sans", sans-serif;
	font-size: 12px;
	color: #8e8e8e;
}

/* cookie popup */
.cookie{
	position: absolute;
	left: 12px;
	top: 754px;
	width: 400px;
	height: 186px;
	background: #fff;
	border-radius: 6px;
	padding: 24px;
	box-shadow: 0 2px 20px rgba(0,0,0,0.15);
	font-family: Inter, sans-serif;
	color: #3d3642;
}
.cookie-title{
	display: flex;
	align-items: center;
	font-size: 11.5px;
	line-height: 14px;
	letter-spacing: 0.7px;
	font-weight: 700;
	color: #ff5733;
}
.cookie-milk{
	margin: 0 7px 0 4px;
}
.cookie-text{
	margin-top: 13px;
	font-size: 15px;
	line-height: 26px;
	letter-spacing: 0.25px;
}
.cookie-ok{
	vertical-align: -3px;
	margin: 0 2px;
}
.cookie-btn{
	display: block;
	width: 352px;
	height: 39px;
	margin-top: 20px;
	border: 0;
	border-radius: 3px;
	background: #ff5733;
	color: #fff;
	font-family: "DejaVu Sans", sans-serif;
	font-weight: 700;
	font-size: 12px;
	letter-spacing: 1px;
}
```
